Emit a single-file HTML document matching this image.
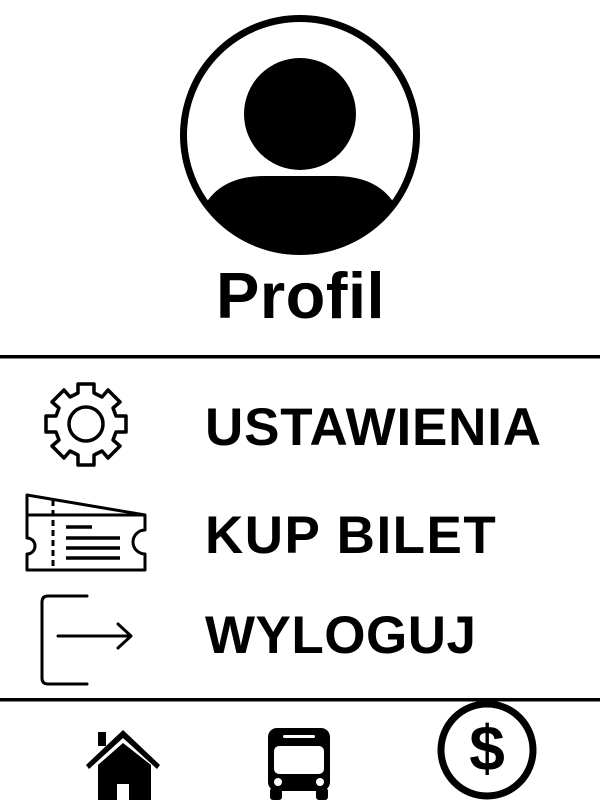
<!DOCTYPE html>
<html><head><style>
html,body{margin:0;padding:0;background:#fff;}
body{width:600px;height:800px;position:relative;overflow:hidden;font-family:"Liberation Sans",sans-serif;font-weight:bold;color:#000;}
.t{position:absolute;white-space:nowrap;line-height:1;}
</style></head><body>
<svg width="600" height="800" style="position:absolute;left:0;top:0">
<defs><clipPath id="c"><circle cx="300" cy="135" r="116"/></clipPath></defs>
<circle cx="300" cy="135" r="116.5" fill="none" stroke="#000" stroke-width="7"/>
<circle cx="300" cy="114" r="56" fill="#000"/>
<path clip-path="url(#c)" d="M200 260 L200 215 Q215 176 265 176 L335 176 Q385 176 400 215 L400 260 Z" fill="#000"/>
<rect x="0" y="355" width="600" height="3.5" fill="#000"/>
<rect x="0" y="698" width="600" height="3.5" fill="#000"/>
<!-- gear -->
<g fill="none" stroke="#000" stroke-width="3.5" stroke-linejoin="round">
<circle cx="86" cy="424" r="17"/>
<path d="M78 384 L94 384 L94 393 L102 397 L108 390 L120 402 L113 408 L116 416 L126 416 L126 432 L116 432 L113 440 L120 446 L108 458 L102 451 L94 455 L94 465 L78 465 L78 455 L70 451 L64 458 L52 446 L59 440 L56 432 L46 432 L46 416 L56 416 L59 408 L52 402 L64 390 L70 397 L78 393 Z"/>
</g>
<!-- ticket -->
<g fill="none" stroke="#000" stroke-width="3" stroke-linejoin="round">
<path d="M27 515 L27 495 L145 515"/>
<path d="M27 515 L145 515 L145 530 A12 12 0 0 0 145 554 L145 570 L27 570 L27 554 A8 8 0 0 0 27 538 Z"/>
<path d="M53 500 L53 570" stroke-dasharray="6 4"/>
<path d="M66 527 L92 527 M66 538 L120 538 M66 548 L120 548 M66 558 L120 558" stroke-width="3.5"/>
</g>
<!-- logout -->
<g fill="none" stroke="#000" stroke-width="3" stroke-linecap="round" stroke-linejoin="round">
<path d="M87 596 L48 596 Q42 596 42 602 L42 678 Q42 684 48 684 L87 684"/>
<path d="M58 636 L131 636 M118 624 L131 636 L118 648"/>
</g>
<!-- home -->
<path d="M123 730 L86 765 L89 769 L123 738 L157 769 L160 765 Z" fill="#000"/>
<rect x="98" y="732" width="8" height="14" fill="#000"/>
<path d="M123 743 L98 765 L98 800 L117 800 L117 784 L129 784 L129 800 L151 800 L151 765 Z" fill="#000"/>
<!-- bus -->
<rect x="268" y="728" width="62" height="63" rx="9" fill="#000"/>
<rect x="274" y="746" width="50" height="28" rx="5" fill="#fff"/>
<rect x="283" y="735" width="32" height="3" rx="1.5" fill="#fff"/>
<circle cx="278" cy="782" r="4" fill="#fff"/>
<circle cx="320" cy="782" r="4" fill="#fff"/>
<rect x="270" y="788" width="12" height="12" rx="3" fill="#000"/>
<rect x="316" y="788" width="12" height="12" rx="3" fill="#000"/>
<!-- dollar -->
<circle cx="487" cy="750" r="46" fill="none" stroke="#000" stroke-width="7"/>
</svg>
<div class="t" style="left:463px;top:716px;font-size:64px;width:48px;text-align:center;">$</div>
<div class="t" style="left:216px;top:263px;font-size:65px;letter-spacing:0.5px;">Profil</div>
<div class="t" style="left:205px;top:401px;font-size:53px;letter-spacing:0.8px;">USTAWIENIA</div>
<div class="t" style="left:205px;top:509px;font-size:53px;letter-spacing:1.5px;">KUP BILET</div>
<div class="t" style="left:205px;top:609px;font-size:53px;letter-spacing:0.5px;">WYLOGUJ</div>
</body></html>
